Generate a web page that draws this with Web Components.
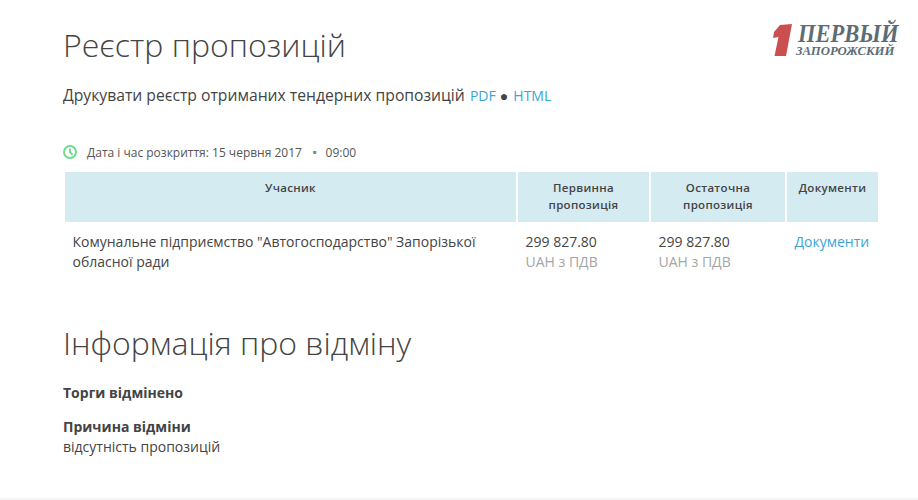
<!DOCTYPE html>
<html>
<head>
<meta charset="utf-8">
<style>
  html, body { margin: 0; background: #fff; }
  body { font-family: "Open Sans", sans-serif; color: #444; overflow: hidden; }
</style>
</head>
<body>
<tender-page>
  <site-logo slot="logo"></site-logo>
  <section-title>Реєстр пропозицій</section-title>
  <print-links></print-links>
  <opening-date></opening-date>
  <bids-table></bids-table>
  <section-title class="second">Інформація про відміну</section-title>
  <cancel-info></cancel-info>
</tender-page>

<script>
class TenderPage extends HTMLElement {
    constructor() {
        super();
        this.attachShadow({ mode: 'open' });
        this.shadowRoot.innerHTML = `
      <style>
        :host {
          display: block;
          height: 500px;
          box-sizing: border-box;
          padding: 23px 40px 0 63px;
          position: relative;
          border-bottom: 2px solid #f5f5f5;
        }
        .logo {
          position: absolute;
          top: 23px;
          left: 772px;
        }
      </style>
      <div class="logo"><slot name="logo"></slot></div>
      <slot></slot>
    `;
    }
}

class SectionTitle extends HTMLElement {
    constructor() {
        super();
        this.attachShadow({ mode: 'open' });
        this.shadowRoot.innerHTML = `
      <style>
        :host {
          display: block;
          font-size: 32px;
          font-weight: 300;
          line-height: 44px;
          color: #444;
        }
        :host(.second) {
          margin-top: 49px;
        }
      </style>
      <slot></slot>
    `;
    }
}

class SiteLogo extends HTMLElement {
    constructor() {
        super();
        this.attachShadow({ mode: 'open' });
        this.shadowRoot.innerHTML = `
      <style>
        :host { display: block; }
        .wrap { display: flex; align-items: flex-start; gap: 4px; }
        svg { display: block; margin-top: 1px; }
        .names {
          font-family: "Liberation Serif", serif;
          font-style: italic;
          font-weight: bold;
          color: #5d6d75;
          white-space: nowrap;
        }
        .big {
          font-size: 25px;
          line-height: 22px;
          margin-left: 2px;
          transform: scaleX(0.9);
          transform-origin: left center;
        }
        .small { font-size: 12.8px; line-height: 14px; margin-top: -1px; }
      </style>
      <div class="wrap">
        <svg width="20" height="33" viewBox="0 0 20 33"><path d="M8 1 L20 0 L14 32 L2.5 32 L6.5 13 L1 14 L2 8 Z" fill="#c9504f"/></svg>
        <div class="names">
          <div class="big">ПЕРВЫЙ</div>
          <div class="small">ЗАПОРОЖСКИЙ</div>
        </div>
      </div>
    `;
    }
}

class PrintLinks extends HTMLElement {
    constructor() {
        super();
        this.attachShadow({ mode: 'open' });
        this.shadowRoot.innerHTML = `
      <style>
        :host {
          display: block;
          margin-top: 7px;
          font-size: 15.7px;
          line-height: 42px;
          color: #444;
        }
        a { color: #3aa4d8; text-decoration: none; font-size: 14px; }
        a.pdf { margin-left: 1px; }
        .sep { font-size: 14px; margin-right: 1px; }
      </style>
      Друкувати реєстр отриманих тендерних пропозицій <a class="pdf" href="#">PDF</a> <span class="sep">●</span> <a href="#">HTML</a>
    `;
    }
}

class OpeningDate extends HTMLElement {
    constructor() {
        super();
        this.attachShadow({ mode: 'open' });
        this.shadowRoot.innerHTML = `
      <style>
        :host {
          display: flex;
          align-items: center;
          margin-top: 25px;
          height: 20px;
          font-size: 12px;
          color: #555;
        }
        svg { display: block; margin-right: 10px; }
        .dot { color: #5a9e5a; margin: 0 9px 0 11px; font-size: 6px; }
      </style>
      <svg width="14" height="14" viewBox="0 0 14 14" fill="none" stroke="#6fdc8c" stroke-width="1.9">
        <circle cx="7" cy="7" r="6"/>
        <path d="M7 3.4 V7.2 L9.6 9.8"/>
      </svg>
      <span>Дата і час розкриття: 15 червня 2017</span>
      <span class="dot">■</span>
      <span>09:00</span>
    `;
    }
}

class BidsTable extends HTMLElement {
    constructor() {
        super();
        this.attachShadow({ mode: 'open' });
        const row = `
          <div class="cell"><div>299 827.80</div><div class="tax">UAH з ПДВ</div></div>`;
        this.shadowRoot.innerHTML = `
      <style>
        :host {
          display: grid;
          grid-template-columns: 451px 131px 134px 91px;
          column-gap: 2px;
          margin: 10px 0 0 2px;
          width: 813px;
        }
        .head {
          background: #d5ebf2;
          height: 50px;
          box-sizing: border-box;
          padding-top: 7px;
          font-size: 11.5px;
          line-height: 17px;
          font-weight: 600;
          text-align: center;
          color: #444;
          letter-spacing: 0.3px;
        }
        .cell {
          padding: 10px 8px 0 7.5px;
          font-size: 14px;
          line-height: 20px;
          color: #444;
        }
        .tax { color: #a5a5a5; }
        a { color: #3aa4d8; text-decoration: none; }
      </style>
      <div class="head">Учасник</div>
      <div class="head">Первинна<br>пропозиція</div>
      <div class="head">Остаточна<br>пропозиція</div>
      <div class="head">Документи</div>
      <div class="cell">Комунальне підприємство "Автогосподарство" Запорізької обласної ради</div>
      ${row}
      ${row}
      <div class="cell"><a href="#">Документи</a></div>
    `;
    }
}

class CancelInfo extends HTMLElement {
    constructor() {
        super();
        this.attachShadow({ mode: 'open' });
        this.shadowRoot.innerHTML = `
      <style>
        :host {
          display: block;
          margin-top: 17px;
          font-size: 14px;
          line-height: 21px;
          color: #444;
        }
        b { font-weight: 700; display: block; }
        .reason { margin-top: 14px; line-height: 20px; }
      </style>
      <b>Торги відмінено</b>
      <div class="reason"><b>Причина відміни</b>відсутність пропозицій</div>
    `;
    }
}

customElements.define('tender-page', TenderPage);
customElements.define('section-title', SectionTitle);
customElements.define('site-logo', SiteLogo);
customElements.define('print-links', PrintLinks);
customElements.define('opening-date', OpeningDate);
customElements.define('bids-table', BidsTable);
customElements.define('cancel-info', CancelInfo);
</script>
</body>
</html>
